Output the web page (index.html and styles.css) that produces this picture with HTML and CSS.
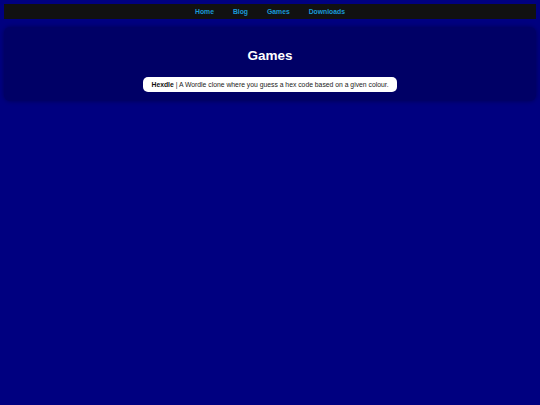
FILE: index.html
```html
<!DOCTYPE html>
<html>
<head>
<meta charset="utf-8">
<link rel="stylesheet" href="styles.css">
</head>
<body>
<nav class="nav">
  <a href="#">Home</a>
  <a href="#">Blog</a>
  <a href="#">Games</a>
  <a href="#">Downloads</a>
</nav>
<main class="card">
  <h1 class="title">Games</h1>
  <div class="item"><b>Hexdle</b> | A Wordle clone where you guess a hex code based on a given colour.</div>
</main>
</body>
</html>
```
FILE: styles.css
```css
html, body {
  margin: 0;
  padding: 0;
}
body {
  background: #000080;
  font-family: "Liberation Sans", Arial, sans-serif;
  padding: 4px;
  min-height: 405px;
  box-sizing: border-box;
}
.nav {
  background: #111111;
  height: 15px;
  display: flex;
  justify-content: center;
  align-items: center;
  gap: 19px;
}
.nav a {
  color: #1a9ad8;
  font-weight: bold;
  font-size: 6.8px;
  text-decoration: none;
}
.card {
  margin-top: 8px;
  background: #000066;
  border-radius: 6px;
  box-shadow: 0 0 5px rgba(0,0,0,0.35);
  height: 74px;
  display: flex;
  flex-direction: column;
  align-items: center;
  box-sizing: border-box;
  padding-top: 21px;
}
.title {
  margin: 0;
  color: #ffffff;
  font-size: 13.5px;
  font-weight: bold;
  line-height: 16px;
}
.item {
  margin-top: 13px;
  background: #ffffff;
  color: #222222;
  border-radius: 5px;
  font-size: 6.8px;
  padding: 0 8px;
  height: 15px;
  line-height: 15px;
  white-space: nowrap;
}
.item b {
  color: #111111;
}
```
